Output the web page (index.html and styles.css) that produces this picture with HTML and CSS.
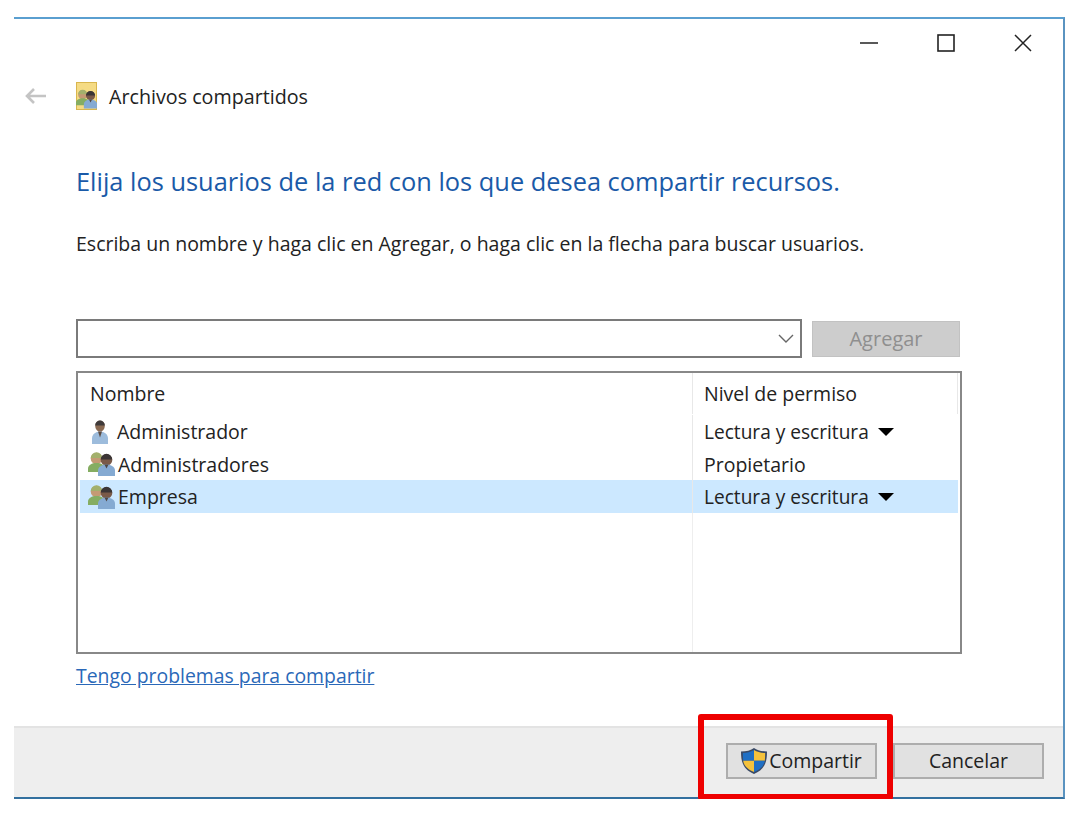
FILE: index.html
```html
<!DOCTYPE html>
<html lang="es">

<head>
    <meta charset="UTF-8">
    <meta name="viewport" content="width=device-width, initial-scale=1.0">
    <title>Archivos compartidos</title>
    <link rel="stylesheet" href="styles.css">
</head>

<body>
    <svg class="defs" width="0" height="0">
        <symbol id="user" viewBox="0 0 20 24">
            <ellipse cx="10" cy="6" rx="4.800" ry="5.600" fill="#8a6a52" />
            <path d="M5.200 5.500a4.800 5 0 0 1 9.600 0z" fill="#3f3a3a" />
            <path d="M2 24v-5.500c0-4 3.500-7 8-7s8 3 8 7V24z" fill="#9dbcdc" />
            <path d="M8 11.500h4l-2 6z" fill="#5c4a40" />
        </symbol>
        <symbol id="group" viewBox="0 0 28 24">
            <circle cx="8.500" cy="6.500" r="5.800" fill="#c49a74" />
            <path d="M2.700 6a5.800 5.800 0 0 1 11.600 0z" fill="#a3b06c" />
            <path d="M0 20v-3.500c0-3.500 4-5.500 8.500-5.500s8.500 2 8.500 5.500V20z" fill="#85ad62" />
            <circle cx="18.500" cy="8" r="5.800" fill="#7a5a48" />
            <path d="M12.700 7.500a5.800 5.800 0 0 1 11.600 0z" fill="#3b3535" />
            <path d="M10 24v-5.500c0-3.500 4-6 8.500-6s8.500 2.500 8.500 6V24z" fill="#85aad2" />
            <path d="M16.500 12.500h4l-2 4z" fill="#4f4643" />
        </symbol>
    </svg>

    <div class="window">
        <div class="titlebar">
            <svg class="winicon" width="18" height="2" viewBox="0 0 18 2"><path d="M0 1h18" stroke="#222" stroke-width="1.500" /></svg>
            <svg class="winicon" width="18" height="18" viewBox="0 0 18 18"><rect x="1" y="1" width="16" height="16" fill="none" stroke="#222" stroke-width="1.600" /></svg>
            <svg class="winicon" width="18" height="18" viewBox="0 0 18 18"><path d="M1 1l16 16M17 1L1 17" stroke="#222" stroke-width="1.500" /></svg>
        </div>

        <div class="navbar">
            <svg class="back" width="22" height="18" viewBox="0 0 22 18"><path d="M22 9H3M10 2L3 9l7 7" fill="none" stroke="#c4c4c4" stroke-width="2.600" /></svg>
            <svg class="navicon" width="21" height="28" viewBox="0 0 21 28">
                <rect x="0.500" y="0.500" width="20" height="27" fill="#f5db84" stroke="#d9b64e" />
                <use href="#group" x="0" y="7" width="22" height="20" />
            </svg>
            <span class="navtitle">Archivos compartidos</span>
        </div>

        <div class="content">
            <h1 class="heading">Elija los usuarios de la red con los que desea compartir recursos.</h1>
            <p class="hint">Escriba un nombre y haga clic en Agregar, o haga clic en la flecha para buscar usuarios.</p>

            <div class="addrow">
                <div class="combo">
                    <svg width="16" height="9" viewBox="0 0 16 9"><path d="M1 1l7 7 7-7" fill="none" stroke="#666" stroke-width="1.400" /></svg>
                </div>
                <button class="addbtn">Agregar</button>
            </div>

            <div class="list">
                <div class="row head">
                    <div class="cell name">Nombre</div>
                    <div class="cell perm">Nivel de permiso</div>
                </div>
                <div class="row first">
                    <div class="cell name">
                        <svg class="usericon single" width="20" height="24"><use href="#user" /></svg>
                        <span>Administrador</span>
                    </div>
                    <div class="cell perm"><span class="level">Lectura y escritura</span><i class="caret"></i></div>
                </div>
                <div class="row second">
                    <div class="cell name">
                        <svg class="usericon" width="28" height="24"><use href="#group" /></svg>
                        <span>Administradores</span>
                    </div>
                    <div class="cell perm">Propietario</div>
                </div>
                <div class="row selected">
                    <div class="cell name">
                        <svg class="usericon" width="28" height="24"><use href="#group" /></svg>
                        <span>Empresa</span>
                    </div>
                    <div class="cell perm"><span class="level">Lectura y escritura</span><i class="caret"></i></div>
                </div>
                <div class="rest">
                    <div class="restname"></div>
                    <div class="restperm"></div>
                </div>
            </div>

            <a class="trouble" href="#">Tengo problemas para compartir</a>
        </div>

        <div class="footer">
            <button class="btn share">
                <svg width="26" height="26" viewBox="1 1 24 26.500" preserveAspectRatio="none">
                    <path d="M13 1c3 2.500 7 3.500 12 3.500 0 10-1.500 18-12 23C2.500 22.500 1 14.500 1 4.500 6 4.500 10 3.500 13 1z" fill="#3a4a66" />
                    <path d="M13 3v11H3c-.2-2.500-.3-5-.3-8C6.500 6 10 5 13 3z" fill="#1f6fc4" />
                    <path d="M13 3c3 2 6.500 3 10.300 3 0 3-.1 5.500-.3 8H13z" fill="#f4c23c" />
                    <path d="M3 14h10v11.500C6.500 22.500 3.800 19 3 14z" fill="#f4c23c" />
                    <path d="M13 14h10c-.8 5-3.500 8.500-10 11.500z" fill="#1f6fc4" />
                </svg>
                <span>Compartir</span>
            </button>
            <button class="btn cancel">Cancelar</button>
            <div class="redmark"></div>
        </div>
    </div>
</body>

</html>
```

FILE: styles.css
```css
* {
    box-sizing: border-box;
}

body {
    margin: 0;
    background: #fff;
    font-family: "Open Sans", "Noto Sans", sans-serif;
    font-size: 19.5px;
    color: #222;
}

.defs {
    display: block;
    height: 0;
}

.window {
    width: 1051px;
    height: 782px;
    margin: 17px 0 0 14px;
    border-top: 2px solid #5a9fd0;
    border-right: 2px solid #5a93c0;
    border-bottom: 2px solid #33709f;
    display: flex;
    flex-direction: column;
}

.titlebar {
    height: 48px;
    display: flex;
    justify-content: flex-end;
    align-items: center;
    gap: 59px;
    padding: 0 31px 0 0;
}

.navbar {
    height: 32px;
    margin-top: 13px;
    display: flex;
    align-items: center;
    padding-left: 10px;
}

.navicon {
    margin-left: 30px;
}

.navtitle {
    margin-left: 12px;
    font-size: 19.7px;
}

.content {
    flex: 1;
    padding: 0 0 0 62px;
}

.heading {
    margin: 52px 0 0;
    font-size: 25.4px;
    font-weight: 400;
    line-height: 34px;
    color: #1a5aa8;
}

.hint {
    margin: 33px 0 0;
    line-height: 26px;
}

.addrow {
    margin-top: 62px;
    display: flex;
    align-items: center;
    gap: 10px;
}

.combo {
    width: 726px;
    height: 39px;
    border: 2px solid #7a7a7a;
    display: flex;
    justify-content: flex-end;
    align-items: center;
    padding-right: 6px;
}

.addbtn {
    width: 148px;
    height: 36px;
    border: 1px solid #c2c2c2;
    background: #cdcdcd;
    color: #8f8f8f;
    font: inherit;
    font-size: 20px;
}

.list {
    width: 886px;
    height: 283px;
    margin-top: 13px;
    border: 2px solid #888;
    padding: 0 2px;
    display: flex;
    flex-direction: column;
}

.row {
    display: flex;
    height: 33px;
    flex: none;
}

.head {
    height: 41px;
}

.first {
    margin-top: 1px;
}

.second {
    height: 32px;
}

.selected {
    background: #cce8ff;
}

.cell {
    display: flex;
    align-items: center;
}

.name {
    width: 612px;
    padding-left: 10px;
}

.perm {
    width: 266px;
    padding-left: 11px;
    border-left: 1px solid #e8e8e8;
}

.head .perm {
    border-right: 1px solid #e8e8e8;
}

.level {
    font-size: 19.1px;
}

.usericon {
    margin: 0 2px 0 -2px;
    flex: none;
}

.usericon.single {
    margin: 0 7px 0 0;
}

.caret {
    width: 0;
    height: 0;
    margin-left: 9px;
    border-left: 8px solid transparent;
    border-right: 8px solid transparent;
    border-top: 8px solid #000;
}

.rest {
    flex: 1;
    display: flex;
}

.restname {
    width: 612px;
}

.restperm {
    border-left: 1px solid #eee;
}

.trouble {
    display: inline-block;
    margin-top: 9px;
    line-height: 26px;
    font-size: 19.4px;
    color: #2a68b8;
    text-decoration: underline;
}

.footer {
    position: relative;
    height: 71px;
    background: #eee;
    border-top: 2px solid #e3e3e3;
    display: flex;
    align-items: center;
    justify-content: flex-end;
    gap: 16px;
    padding: 0 19px 4px 0;
}

.btn {
    width: 151px;
    height: 36px;
    border: 2px solid #adadad;
    background: #e1e1e1;
    font: inherit;
    color: #222;
    display: flex;
    align-items: center;
    justify-content: center;
    padding: 0;
}

.share {
    gap: 2px;
}

.redmark {
    position: absolute;
    left: 684px;
    top: -14px;
    width: 195px;
    height: 86px;
    border: 6px solid #ee0000;
    border-radius: 3px;
}
```
